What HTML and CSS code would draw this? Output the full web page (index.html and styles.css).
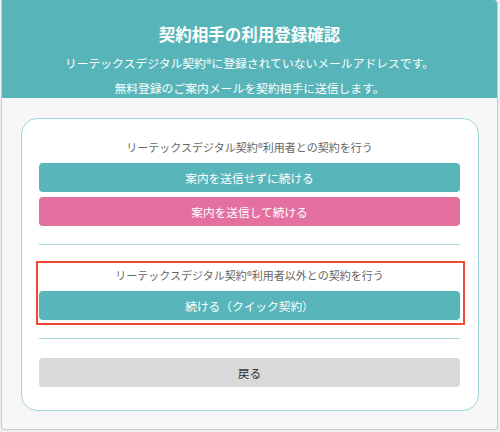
FILE: index.html
```html
<!DOCTYPE html>
<html lang="ja">
<head>
<meta charset="utf-8">
<title>契約相手の利用登録確認</title>
<link rel="stylesheet" href="styles.css">
</head>
<body>
<div class="modal">
  <div class="modal-header">
    <h1 class="title">契約相手の利用登録確認</h1>
    <p class="subtitle">リーテックスデジタル契約®に登録されていないメールアドレスです。<br>無料登録のご案内メールを契約相手に送信します。</p>
  </div>
  <div class="modal-body">
    <div class="card">
      <div class="section">
        <p class="label">リーテックスデジタル契約®利用者との契約を行う</p>
        <button class="btn btn-teal">案内を送信せずに続ける</button>
        <button class="btn btn-pink">案内を送信して続ける</button>
      </div>
      <hr class="divider">
      <div class="section section-quick">
        <p class="label">リーテックスデジタル契約®利用者以外との契約を行う</p>
        <button class="btn btn-teal">続ける（クイック契約）</button>
      </div>
      <hr class="divider divider-2">
      <button class="btn btn-gray">戻る</button>
    </div>
  </div>
</div>
</body>
</html>
```
FILE: styles.css
```css
* { box-sizing: border-box; }
html, body {
  margin: 0;
  padding: 0;
  background: #efefef;
  font-family: "Noto Sans CJK JP", "Noto Sans", sans-serif;
}
.modal {
  margin-left: 1px;
  width: 497px;
  border: 1px solid #c9c9c9;
  border-top: none;
  border-radius: 0 4px 4px 4px;
  overflow: hidden;
  background: #f7f7f7;
}
.modal-header {
  height: 98px;
  background: #57b5b9;
  color: #fff;
  text-align: center;
  padding-top: 24px;
}
.title {
  margin: 0;
  font-size: 16.5px;
  line-height: 20px;
  font-weight: 700;
}
.subtitle {
  margin: 6px 0 0;
  font-size: 11.8px;
  line-height: 25px;
}
.modal-body {
  padding: 20px 18px 18px 19px;
}
.card {
  background: #fff;
  border: 1px solid #9fd6d9;
  border-radius: 16px;
  padding: 20px 18px 23px 17px;
  display: flex;
  flex-direction: column;
}
.section {
  display: flex;
  flex-direction: column;
}
.label {
  margin: 0 0 8px;
  font-size: 11px;
  line-height: 16px;
  color: #666;
  text-align: center;
}
.btn {
  display: block;
  width: 100%;
  height: 29px;
  border: none;
  border-radius: 4px;
  font-family: inherit;
  font-size: 11.7px;
  line-height: 29px;
  padding: 0;
  color: #fff;
  text-align: center;
}
.btn-teal { background: #58b5b9; }
.btn-pink { background: #e4709f; margin-top: 5px; }
.btn-gray { background: #d9d9d9; color: #333; }
.divider {
  border: none;
  height: 1px;
  background: #a6d9dc;
  margin: 18px 0 22px;
}
.divider-2 {
  margin: 18px 0 19px;
}
.section-quick {
  position: relative;
}
.section-quick::after {
  content: "";
  position: absolute;
  top: -6px;
  bottom: -5px;
  left: -3px;
  right: -5px;
  border: 2px solid #ef4a36;
  pointer-events: none;
}
```
